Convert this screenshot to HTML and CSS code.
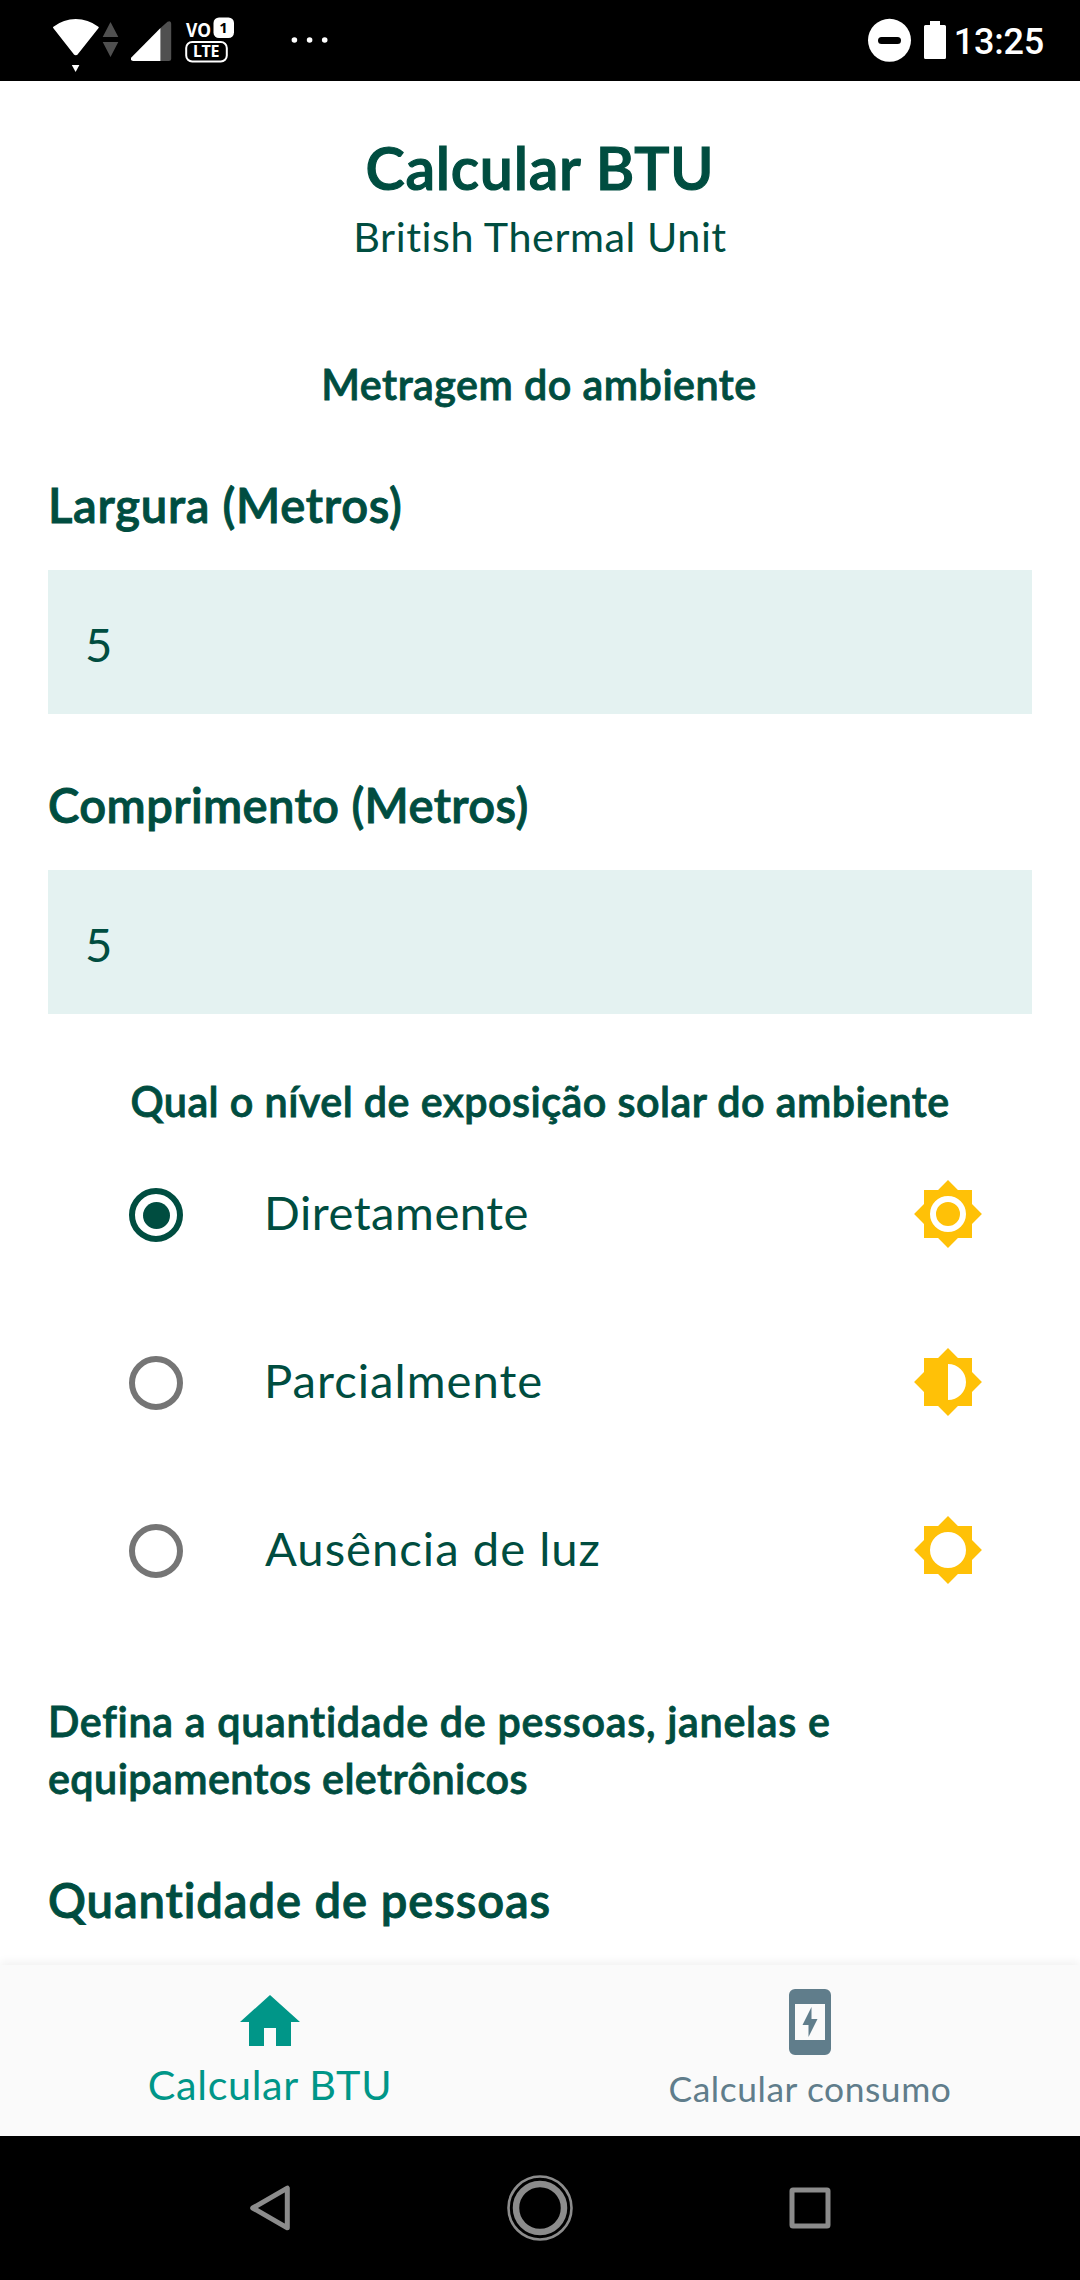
FILE: index.html
```html
<!DOCTYPE html>
<html lang="pt-BR">
<head>
<meta charset="utf-8">
<title>Calcular BTU</title>
<link rel="stylesheet" href="styles.css">
</head>
<body>
<div class="screen">
  <header class="status">
    <svg class="status-icons" width="340" height="81" viewBox="0 0 340 81">
      <path fill="#fff" stroke="#fff" stroke-width="2" stroke-linejoin="round" d="M54 27.500Q64 20 75.800 20T97.800 27.500L77.200 53.500Q75.800 55 74.400 53.500Z"/>
      <path fill="#fff" d="M71.800 65h7.600l-3.800 7z"/>
      <path fill="#505050" d="M110.500 22l7.800 15h-15.600zM110.500 57l7.800-15h-15.600z"/>
      <path fill="#505050" d="M160.500 28l7-6.300q3.700-1.700 3.700 2V58.500q0 2.500-2.500 2.500h-8.200z"/>
      <path fill="#fff" d="M160.500 28V61H133q-3-.5-1.700-3.500z"/>
      <rect x="213.500" y="17.500" width="20.500" height="20.500" rx="5.500" fill="#fff"/>
      <rect x="186.200" y="42" width="40.600" height="19.500" rx="6" fill="none" stroke="#fff" stroke-width="2"/>
      <text class="badge-text" x="186" y="37" textLength="25" lengthAdjust="spacingAndGlyphs" font-size="19.500">VO</text>
      <text class="badge-text dark" x="219.200" y="33" font-size="15">1</text>
      <text class="badge-text" x="193" y="57.300" textLength="26.500" lengthAdjust="spacing" font-size="16">LTE</text>
      <g fill="#fff"><circle cx="294.400" cy="40" r="2.800"/><circle cx="309.600" cy="40" r="2.800"/><circle cx="324.700" cy="40" r="2.800"/></g>
    </svg>
    <div class="status-right">
      <svg width="80" height="81" viewBox="868 0 80 81">
        <circle cx="889.500" cy="40.300" r="21.500" fill="#fff"/>
        <rect x="878" y="37" width="23" height="7" rx="3.500"/>
        <path fill="#fff" d="M930 25v-4h10v4h4.500q1.500 0 1.500 1.500v31q0 1.500-1.500 1.500h-19q-1.500 0-1.500-1.500v-31q0-1.500 1.500-1.500z"/>
      </svg>
      <span class="clock">13:25</span>
    </div>
  </header>

  <main class="content">
    <h1 class="title">Calcular BTU</h1>
    <p class="subtitle">British Thermal Unit</p>
    <h2 class="section section-metrics">Metragem do ambiente</h2>

    <div class="field">
      <div class="label label-width">Largura (Metros)</div>
      <div class="input">5</div>
    </div>
    <div class="field">
      <div class="label">Comprimento (Metros)</div>
      <div class="input">5</div>
    </div>

    <h2 class="section section-sun">Qual o nível de exposição solar do ambiente</h2>
    <div class="options">
      <div class="option">
        <span class="radio checked"></span>
        <span class="option-text option-direct">Diretamente</span>
        <svg class="sun" viewBox="0 0 24 24"><path d="M12 8a4 4 0 1 0 0 8 4 4 0 0 0 0-8zm0 10a6 6 0 1 1 0-12 6 6 0 0 1 0 12zm8-9.310V4h-4.690L12 .690 8.690 4H4v4.690L.690 12 4 15.310V20h4.690L12 23.310 15.310 20H20v-4.690L23.310 12z"/></svg>
      </div>
      <div class="option">
        <span class="radio"></span>
        <span class="option-text">Parcialmente</span>
        <svg class="sun" viewBox="0 0 24 24"><path d="M12 18V6a6 6 0 0 1 0 12zm8-2.690L23.310 12 20 8.690V4h-4.690L12 .690 8.690 4H4v4.690L.690 12 4 15.310V20h4.690L12 23.310 15.310 20H20z"/></svg>
      </div>
      <div class="option">
        <span class="radio"></span>
        <span class="option-text option-none">Ausência de luz</span>
        <svg class="sun" viewBox="0 0 24 24"><path d="M12 18a6 6 0 1 1 0-12 6 6 0 0 1 0 12zm8-2.690L23.310 12 20 8.690V4h-4.690L12 .690 8.690 4H4v4.690L.690 12 4 15.310V20h4.690L12 23.310 15.310 20H20z"/></svg>
      </div>
    </div>

    <p class="section section-amounts">Defina a quantidade de pessoas, janelas e<br><span class="tight">equipamentos eletrônicos</span></p>
    <div class="label label-people">Quantidade de pessoas</div>
  </main>

  <nav class="tabs">
    <div class="tab tab-active">
      <svg viewBox="0 0 24 24"><path d="M10 20v-6h4v6h5v-8h3L12 3 2 12h3v8z"/></svg>
      <span>Calcular BTU</span>
    </div>
    <div class="tab">
      <svg viewBox="0 0 24 24"><path fill-rule="evenodd" d="M7 1h10a2 2 0 0 1 2 2v18a2 2 0 0 1-2 2H7a2 2 0 0 1-2-2V3a2 2 0 0 1 2-2zM7 6v12h10V6z"/><path d="M12.500 7v4h2l-3 6v-4h-2z"/></svg>
      <span>Calcular consumo</span>
    </div>
  </nav>

  <footer class="system-nav">
    <svg viewBox="0 0 80 80"><path d="M57.300 20.200V59.800L22.700 40z"/></svg>
    <svg viewBox="0 0 80 80"><circle cx="40" cy="40" r="24"/><circle cx="40" cy="40" r="31.500"/></svg>
    <svg viewBox="0 0 80 80"><rect x="22" y="22" width="36" height="36" rx="1"/></svg>
  </footer>
</div>
</body>
</html>
```
FILE: styles.css
```css
* { box-sizing: border-box; }

body {
  margin: 0;
  background: #fff;
  color: #004d40;
  font-family: Lato, "Open Sans", sans-serif;
  font-variant-ligatures: none;
}

.screen {
  display: flex;
  flex-direction: column;
  width: 1080px;
  height: 2280px;
  overflow: hidden;
}

h1, h2, p { margin: 0; }

.status {
  display: flex;
  flex: none;
  justify-content: space-between;
  height: 81px;
  padding-right: 36px;
  background: #000;
}

.status svg { display: block; }

.status-right { display: flex; }

.clock {
  margin-left: 6px;
  color: #fff;
  font: 500 36px/84px Roboto, sans-serif;
  letter-spacing: -0.2px;
}

.badge-text {
  fill: #fff;
  font-family: "Noto Sans", sans-serif;
  font-weight: 700;
}

.badge-text.dark { fill: #000; }

.content {
  flex: 1;
  min-height: 0;
  padding: 46px 48px 0;
  overflow: hidden;
  white-space: nowrap;
}

.title {
  font-size: 59px;
  font-weight: 600;
  line-height: 81px;
  letter-spacing: 0.7px;
  text-align: center;
  -webkit-text-stroke: 1.2px currentColor;
}

.subtitle {
  font-size: 41.3px;
  line-height: 56px;
  letter-spacing: 0.55px;
  text-align: center;
}

.section {
  font-size: 41.3px;
  font-weight: 600;
  line-height: 56px;
  -webkit-text-stroke: 0.8px currentColor;
}

.section-metrics {
  margin: 92px 2px 61px 0;
  letter-spacing: 0.48px;
  text-align: center;
}

.section-sun {
  margin-top: 59px;
  letter-spacing: 0.45px;
  text-align: center;
}

.section-amounts {
  margin: 58px 0 61px;
  line-height: 57px;
  letter-spacing: 0.7px;
}

.section-amounts .tight { letter-spacing: 0.42px; }

.label {
  font-size: 47.2px;
  font-weight: 600;
  line-height: 64px;
  letter-spacing: 0.38px;
  -webkit-text-stroke: 0.9px currentColor;
}

.label-width { letter-spacing: 0.72px; }
.label-people { letter-spacing: 0.9px; }

.field + .field { margin-top: 59px; }

.input {
  height: 144px;
  margin-top: 33px;
  padding: 42px 37px 0;
  background: #e4f2f1;
  font-size: 47.2px;
  line-height: 64px;
}

.options {
  margin: 2px 48px 0 81px;
}

.option {
  display: flex;
  align-items: center;
  height: 168px;
}

.radio {
  display: grid;
  place-items: center;
  width: 54px;
  height: 54px;
  border: 6px solid #757575;
  border-radius: 50%;
}

.radio.checked { border-color: #004d40; }

.radio.checked::before {
  width: 27px;
  height: 27px;
  border-radius: 50%;
  background: #004d40;
  content: "";
}

.option-text {
  flex: 1;
  margin-left: 81px;
  padding-bottom: 6px;
  font-size: 47.2px;
  line-height: 64px;
  letter-spacing: 1px;
}

.option-direct { letter-spacing: 0.5px; }
.option-none { margin-left: 82px; }

.sun {
  width: 72px;
  height: 72px;
  margin-bottom: 2px;
  fill: #ffc107;
}

.tabs {
  z-index: 1;
  display: flex;
  flex: none;
  height: 171px;
  background: #fafafa;
  box-shadow: 0 -3px 9px rgba(0, 0, 0, 0.06);
}

.tab {
  display: flex;
  flex: 1;
  flex-direction: column;
  align-items: center;
  padding-top: 21px;
  color: #607d8b;
  font-size: 35.4px;
  line-height: 48px;
  letter-spacing: 0.56px;
}

.tab svg {
  width: 72px;
  height: 72px;
  margin-bottom: 7px;
  fill: currentColor;
}

.tab-active {
  color: #009688;
  font-size: 41.3px;
  letter-spacing: 0.66px;
}

.tab-active svg { margin-bottom: 2px; }

.system-nav {
  position: relative;
  z-index: 2;
  display: flex;
  flex: none;
  align-items: center;
  justify-content: space-between;
  height: 144px;
  padding: 0 230px;
  background: #000;
}

.system-nav svg {
  width: 80px;
  height: 80px;
  fill: none;
  stroke: #8c8c8c;
  stroke-linejoin: round;
  stroke-width: 5px;
}

.system-nav circle:first-child { stroke-width: 6.5px; }
.system-nav circle:last-child { stroke-width: 2.6px; }
```
